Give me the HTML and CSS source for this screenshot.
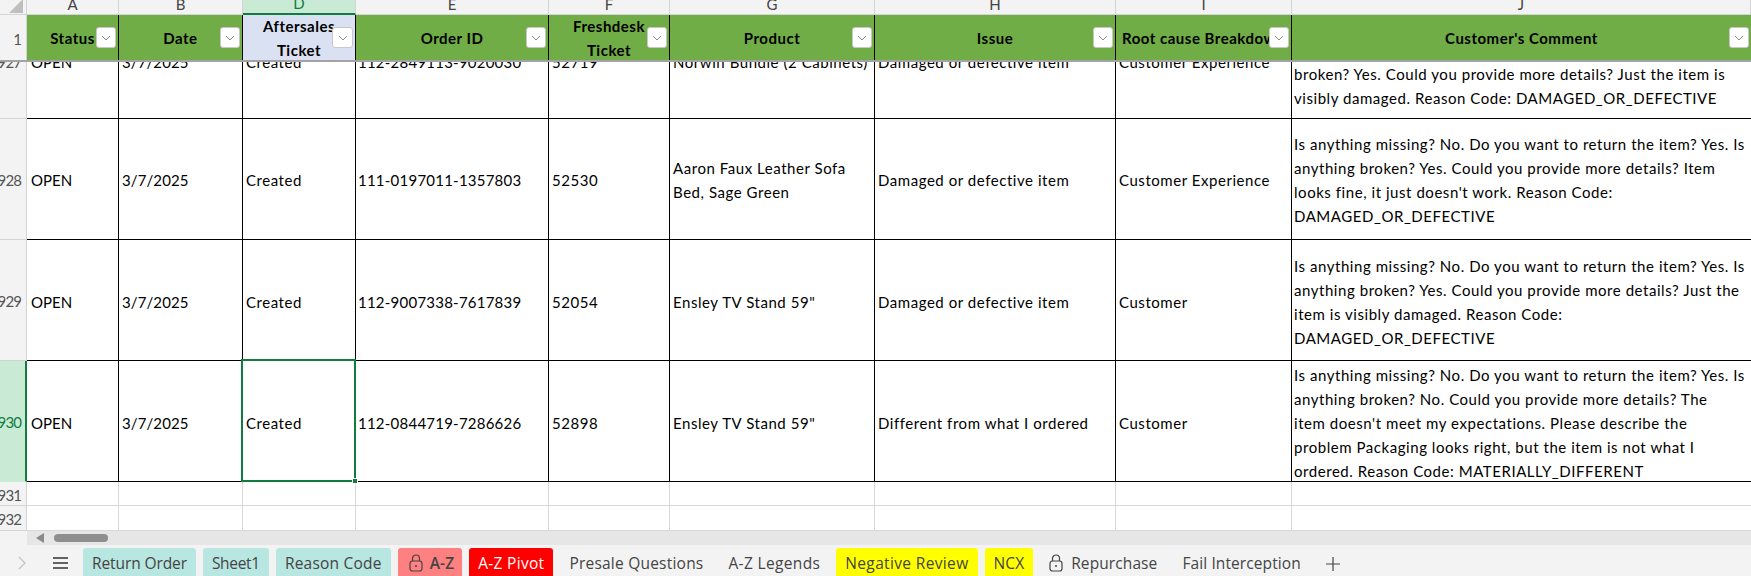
FILE: index.html
```html
<!DOCTYPE html>
<html lang="en">
<head>
<meta charset="utf-8">
<title>Return Order</title>
<link rel="stylesheet" href="styles.css">
</head>
<body>
<div class="app">
  <div class="sheet">
    <div class="row col-heads">
      <div class="corner"><svg class="corner-mark" width="14" height="14" viewBox="0 0 14 14"><path d="M14 0V14H0Z"/></svg></div>
      <div class="ch">A</div><div class="ch">B</div><div class="ch ch-on">D</div><div class="ch">E</div><div class="ch">F</div><div class="ch">G</div><div class="ch">H</div><div class="ch">I</div><div class="ch">J</div>
    </div>
    <div class="row head-row">
      <div class="rn">1</div>
      <div class="hd"><span class="hd-text">Status</span><button class="filter"><svg width="10" height="6" viewBox="0 0 10 6"><path d="M1 1l4 4 4-4"/></svg></button></div>
      <div class="hd"><span class="hd-text">Date</span><button class="filter"><svg width="10" height="6" viewBox="0 0 10 6"><path d="M1 1l4 4 4-4"/></svg></button></div>
      <div class="hd hd-alt"><span class="hd-text">Aftersales<br>Ticket</span><button class="filter filter-wide"><svg width="10" height="6" viewBox="0 0 10 6"><path d="M1 1l4 4 4-4"/></svg></button></div>
      <div class="hd"><span class="hd-text">Order ID</span><button class="filter"><svg width="10" height="6" viewBox="0 0 10 6"><path d="M1 1l4 4 4-4"/></svg></button></div>
      <div class="hd"><span class="hd-text">Freshdesk<br>Ticket</span><button class="filter"><svg width="10" height="6" viewBox="0 0 10 6"><path d="M1 1l4 4 4-4"/></svg></button></div>
      <div class="hd"><span class="hd-text">Product</span><button class="filter"><svg width="10" height="6" viewBox="0 0 10 6"><path d="M1 1l4 4 4-4"/></svg></button></div>
      <div class="hd"><span class="hd-text">Issue</span><button class="filter"><svg width="10" height="6" viewBox="0 0 10 6"><path d="M1 1l4 4 4-4"/></svg></button></div>
      <div class="hd"><span class="hd-text">Root cause Breakdown</span><button class="filter"><svg width="10" height="6" viewBox="0 0 10 6"><path d="M1 1l4 4 4-4"/></svg></button></div>
      <div class="hd hd-last"><span class="hd-text">Customer's Comment</span><button class="filter"><svg width="10" height="6" viewBox="0 0 10 6"><path d="M1 1l4 4 4-4"/></svg></button></div>
    </div>
    <div class="row data-row clipped">
      <div class="rn">1927</div>
      <div class="td td-first">OPEN</div><div class="td td-date">3/7/2025</div><div class="td">Created</div><div class="td td-id">112-2849113-9020030</div><div class="td">52719</div><div class="td">Norwin Bundle (2 Cabinets)</div><div class="td">Damaged or defective item</div><div class="td">Customer Experience</div>
      <div class="td td-comment">Is anything missing? No. Do you want to return the item? Yes. Is anything<br>broken? Yes. Could you provide more details? Just the item is<br>visibly damaged. Reason Code: DAMAGED_OR_DEFECTIVE</div>
    </div>
    <div class="row data-row row-up">
      <div class="rn">1928</div>
      <div class="td td-first">OPEN</div><div class="td td-date">3/7/2025</div><div class="td">Created</div><div class="td td-id">111-0197011-1357803</div><div class="td">52530</div><div class="td">Aaron Faux Leather Sofa<br>Bed, Sage Green</div><div class="td">Damaged or defective item</div><div class="td">Customer Experience</div>
      <div class="td td-comment">Is anything missing? No. Do you want to return the item? Yes. Is<br>anything broken? Yes. Could you provide more details? Item<br>looks fine, it just doesn't work. Reason Code:<br>DAMAGED_OR_DEFECTIVE</div>
    </div>
    <div class="row data-row">
      <div class="rn">1929</div>
      <div class="td td-first">OPEN</div><div class="td td-date">3/7/2025</div><div class="td">Created</div><div class="td td-id">112-9007338-7617839</div><div class="td">52054</div><div class="td">Ensley TV Stand 59"</div><div class="td">Damaged or defective item</div><div class="td">Customer</div>
      <div class="td td-comment">Is anything missing? No. Do you want to return the item? Yes. Is<br>anything broken? Yes. Could you provide more details? Just the<br>item is visibly damaged. Reason Code:<br>DAMAGED_OR_DEFECTIVE</div>
    </div>
    <div class="row data-row">
      <div class="rn rn-on">1930</div>
      <div class="td td-first">OPEN</div><div class="td td-date">3/7/2025</div><div class="td td-selected">Created<span class="selection"><span class="handle"></span></span></div><div class="td td-id">112-0844719-7286626</div><div class="td">52898</div><div class="td">Ensley TV Stand 59"</div><div class="td">Different from what I ordered</div><div class="td">Customer</div>
      <div class="td td-comment">Is anything missing? No. Do you want to return the item? Yes. Is<br>anything broken? No. Could you provide more details? The<br>item doesn't meet my expectations. Please describe the<br>problem Packaging looks right, but the item is not what I<br>ordered. Reason Code: MATERIALLY_DIFFERENT</div>
    </div>
    <div class="row empty-row">
      <div class="rn">1931</div><div class="ec"></div><div class="ec"></div><div class="ec"></div><div class="ec"></div><div class="ec"></div><div class="ec"></div><div class="ec"></div><div class="ec"></div><div class="ec"></div>
    </div>
    <div class="row empty-row empty-last">
      <div class="rn">1932</div><div class="ec"></div><div class="ec"></div><div class="ec"></div><div class="ec"></div><div class="ec"></div><div class="ec"></div><div class="ec"></div><div class="ec"></div><div class="ec"></div>
    </div>
  </div>
  <div class="hscroll">
    <div class="track">
      <svg class="arrow" width="8" height="10" viewBox="0 0 8 10"><path d="M8 0V10L0 5Z"/></svg>
      <div class="thumb"></div>
    </div>
  </div>
  <div class="tabbar">
    <svg class="nav-next" width="8" height="14" viewBox="0 0 8 14"><path d="M1 1l6 6-6 6"/></svg>
    <svg class="nav-all" width="15" height="12" viewBox="0 0 15 12"><path d="M0 1h15M0 6h15M0 11h15"/></svg>
    <div class="tabs">
      <div class="tab tab-teal ls-tight">Return Order</div>
      <div class="tab tab-teal ls-tighter">Sheet1</div>
      <div class="tab tab-teal ls-mid">Reason Code</div>
      <div class="tab tab-pink"><svg class="lock" width="14" height="18" viewBox="0 0 14 18"><path d="M3.5 7V4.5a3.5 3.5 0 0 1 7 0V7"/><rect x="1" y="7" width="12" height="10" rx="2.5"/><circle cx="7" cy="12" r="1" class="lock-dot"/></svg><b class="tab-strong">A-Z</b></div>
      <div class="tab tab-red">A-Z Pivot</div>
      <div class="tab ls-mid">Presale Questions</div>
      <div class="tab ls-loose">A-Z Legends</div>
      <div class="tab tab-yellow ls-loose">Negative Review</div>
      <div class="tab tab-yellow">NCX</div>
      <div class="tab tab-locked"><svg class="lock" width="14" height="18" viewBox="0 0 14 18"><path d="M3.5 7V4.5a3.5 3.5 0 0 1 7 0V7"/><rect x="1" y="7" width="12" height="10" rx="2.5"/><circle cx="7" cy="12" r="1" class="lock-dot"/></svg>Repurchase</div>
      <div class="tab">Fail Interception</div>
    </div>
    <svg class="add" width="14" height="14" viewBox="0 0 14 14"><path d="M7 0v14M0 7h14"/></svg>
  </div>
</div>
</body>
</html>
```

FILE: styles.css
```css
* { box-sizing: border-box; }
html, body { margin: 0; padding: 0; background: #fff; }
.app {
  width: 1751px;
  height: 576px;
  overflow: hidden;
  display: flex;
  flex-direction: column;
  font-family: "Lato", "Liberation Sans", sans-serif;
  color: #000;
}
.sheet { flex: 0 0 531px; display: flex; flex-direction: column; overflow: hidden; }
.row {
  display: grid;
  grid-template-columns: 27px 92px 124px 113px 193px 121px 205px 241px 176px 459px;
}
.col-heads { height: 15px; background: #f3f3f3; border-bottom: 1px solid #d4d4d4; }
.corner { display: flex; justify-content: flex-end; border-right: 1px solid #d4d4d4; padding: 0 3px 1px 0; }
.corner-mark { fill: #bfbfbf; display: block; margin-top: -1px; }
.ch {
  display: flex;
  justify-content: center;
  align-items: flex-end;
  padding-bottom: 4px;
  border-right: 1px solid #d4d4d4;
  font-size: 15px;
  line-height: 14px;
  color: #444;
  overflow: hidden;
}
.ch-on { background: #c9ebd5; color: #107c41; border-bottom: 2px solid #107c41; height: 15px; padding-bottom: 3px; }
.head-row { height: 47px; border-bottom: 2px solid #a3a3a3; position: relative; z-index: 2; }
.rn {
  display: flex;
  justify-content: flex-end;
  align-items: center;
  padding: 2px 5px 0 0;
  background: #f3f3f3;
  border-bottom: 1px solid #d4d4d4;
  border-right: 1px solid #d4d4d4;
  font-size: 15px;
  letter-spacing: -0.9px;
  color: #555;
  overflow: hidden;
  white-space: nowrap;
}
.head-row .rn { border-bottom: 0; }
.rn-on { background: #c9ebd5; color: #107c41; border-right: 2px solid #107c41; border-bottom-color: #c9ebd5; padding-right: 4px; }
.hd {
  position: relative;
  display: flex;
  justify-content: center;
  align-items: center;
  padding-top: 1px;
  background: #70ad47;
  border-right: 1px solid #000;
  font-size: 15px;
  font-weight: 700;
  letter-spacing: 0.5px;
  line-height: 24px;
  text-align: center;
  white-space: nowrap;
  overflow: hidden;
}
.hd-alt { background: #d9e1f2; }
.hd-last { border-right: 0; }
.filter {
  position: absolute;
  right: 2px;
  top: 12px;
  width: 20px;
  height: 21px;
  padding: 0;
  background: #fff;
  border: 1px solid #c8c8c8;
  border-radius: 3px;
  display: flex;
  align-items: center;
  justify-content: center;
}
.filter-wide { width: 21px; right: 2px; }
.filter svg { fill: none; stroke: #8c8c8c; stroke-width: 1; display: block; }
.data-row { height: 121px; }
.clipped { height: 57px; }
.td {
  position: relative;
  display: flex;
  align-items: center;
  padding: 4px 0 0 3px;
  border-right: 1px solid #000;
  border-bottom: 1px solid #000;
  font-size: 15px;
  letter-spacing: 0.55px;
  line-height: 24px;
  white-space: nowrap;
  overflow: hidden;
}
.td-first { padding-left: 4px; letter-spacing: 0; }
.td-date { letter-spacing: 0.1px; }
.td-id { letter-spacing: 0.23px; padding-left: 2px; }
.td-comment { border-right: 0; padding-left: 2px; }
.row-up .td { padding-top: 2px; }
.clipped .td { align-items: flex-end; padding-top: 0; padding-bottom: 44px; }
.clipped .td-comment { padding-bottom: 8px; }
.clipped .rn { align-items: flex-end; padding-bottom: 44px; line-height: 24px; }
.td-selected { overflow: visible; z-index: 1; }
.selection {
  position: absolute;
  left: -2px;
  top: -2px;
  right: -1px;
  bottom: -1px;
  border: 2px solid #107c41;
}
.handle {
  position: absolute;
  right: -4px;
  bottom: -4px;
  background: #107c41;
  border: 1px solid #fff;
  box-sizing: content-box;
  width: 4px;
  height: 4px;
}
.empty-row { height: 24px; }
.empty-last { height: 25px; }
.ec { border-right: 1px solid #d9d9d9; border-bottom: 1px solid #d9d9d9; }
.ec:last-child { border-right: 0; }
.hscroll { flex: 0 0 14px; background: #f3f3f3; padding-left: 27px; }
.track { height: 14px; background: #e6e6e6; display: flex; align-items: center; padding-left: 9px; }
.arrow { fill: #8a8a8a; display: block; }
.thumb { width: 54px; height: 8px; margin-left: 10px; background: #8f8f8f; border-radius: 4px; }
.tabbar {
  flex: 1;
  display: flex;
  align-items: flex-start;
  background: #f3f3f3;
  font-family: "Open Sans", "Noto Sans", sans-serif;
  font-size: 15.5px;
  letter-spacing: 0.1px;
  color: #444;
}
.nav-next { fill: none; stroke: #c2c2c2; stroke-width: 1.2; margin: 11px 0 0 18px; flex: none; }
.nav-all { fill: none; stroke: #333; stroke-width: 1.3; margin: 12px 0 0 27px; flex: none; }
.tabs { display: flex; gap: 7px; margin: 3px 0 0 15px; }
.tab {
  height: 28px;
  padding: 1px 9px 0;
  display: flex;
  align-items: center;
  white-space: nowrap;
  border-radius: 3px 3px 0 0;
}
.ls-tight { letter-spacing: -0.1px; }
.ls-tighter { letter-spacing: -0.3px; }
.ls-mid { letter-spacing: 0.22px; }
.ls-loose { letter-spacing: 0.35px; }
.tab-teal { background: #b8e6e1; }
.tab-pink { background: #ff8080; gap: 7px; padding: 1px 8px 0 11px; }
.tab-red { background: #ff0000; color: #fff; letter-spacing: 0.3px; }
.tab-yellow { background: #ffff00; }
.tab-locked { gap: 8px; }
.tab-strong { font-weight: 600; }
.lock { fill: none; stroke: #444; stroke-width: 1.2; flex: none; }
.lock-dot { fill: #444; stroke: none; }
.add { fill: none; stroke: #444; stroke-width: 1.2; margin: 12px 0 0 16px; flex: none; }
```
